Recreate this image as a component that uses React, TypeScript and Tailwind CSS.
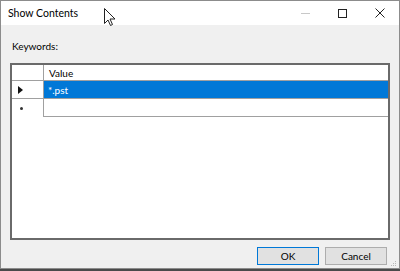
import React from "react";

const font = { fontFamily: 'Lato, "Noto Sans", sans-serif' };

function Cursor() {
  return (
    <svg width="12" height="19" viewBox="0 0 12 19" className="absolute left-[103px] top-[7px]">
      <path d="M0.5 0.5 L0.5 15.5 L4 12 L6.5 17.5 L8.5 16.5 L6 11 L11 11 Z" fill="white" stroke="#222" strokeWidth="1" strokeLinejoin="round" />
    </svg>
  );
}

function Grip() {
  const dots = [
    [5, 0],
    [3, 2], [5, 2],
    [1, 4], [3, 4], [5, 4],
  ];
  return (
    <svg width="7" height="6" viewBox="0 0 7 6" className="absolute right-[2px] bottom-[1px]">
      {dots.map(([x, y], i) => (
        <rect key={i} x={x} y={y} width="1" height="1" fill="#b8b8b8" />
      ))}
    </svg>
  );
}

export default function App() {
  return (
    <div className="w-[400px] h-[271px] bg-[#4a4a4a] overflow-hidden" style={font}>
      <div className="relative w-[400px] h-[269px] border border-[#8c8c8c] flex flex-col bg-[#f0f0f0]">
        {/* Title bar */}
        <div className="h-[24px] bg-white flex items-center shrink-0">
          <span className="pl-[7px] text-[10.5px] text-black leading-none">Show Contents</span>
          <div className="ml-auto flex items-center h-full">
            <div className="w-[37px] h-full flex items-center justify-center">
              <svg width="9" height="9" viewBox="0 0 9 9">
                <line x1="0" y1="4.5" x2="9" y2="4.5" stroke="#c8c8c8" strokeWidth="1" />
              </svg>
            </div>
            <div className="w-[37px] h-full flex items-center justify-center">
              <svg width="9" height="9" viewBox="0 0 9 9">
                <rect x="0.5" y="0.5" width="8" height="8" fill="none" stroke="#222" strokeWidth="1" />
              </svg>
            </div>
            <div className="w-[37px] h-full flex items-center justify-center mr-[1px]">
              <svg width="10" height="10" viewBox="0 0 10 10">
                <path d="M0.5 0.5 L9.5 9.5 M9.5 0.5 L0.5 9.5" stroke="#222" strokeWidth="1" />
              </svg>
            </div>
          </div>
        </div>

        {/* Body */}
        <div className="flex-1 flex flex-col">
          <div className="pl-[11px] pt-[15px] text-[10px] leading-[12px] text-black">Keywords:</div>
          <div className="ml-[9px] mt-[11px] w-[380px] h-[177px] border-2 border-[#6a6a6a] bg-white flex flex-col">
            {/* Header */}
            <div className="flex h-[16px] border-b border-[#a0a0a0]">
              <div className="w-[32px] border-r border-[#a0a0a0]" />
              <div className="flex-1 flex items-center pl-[5px] text-[10px] text-black leading-none">Value</div>
            </div>
            {/* Row 1 */}
            <div className="flex h-[18px] border-b border-[#a0a0a0]">
              <div className="w-[32px] border-r border-[#a0a0a0] flex items-center pl-[6px]">
                <svg width="5" height="8" viewBox="0 0 5 8">
                  <path d="M0 0 L5 4 L0 8 Z" fill="#111" />
                </svg>
              </div>
              <div className="flex-1 bg-[#0078d7] flex items-center pl-[4px] text-[10px] text-white leading-none">*.pst</div>
            </div>
            {/* Row 2 */}
            <div className="flex h-[18px]">
              <div className="w-[32px] border-r border-[#a0a0a0] flex items-center pl-[8px]">
                <div className="w-[3px] h-[3px] rounded-full bg-[#333]" />
              </div>
              <div className="flex-1 border-b border-[#a0a0a0]" />
            </div>
          </div>
          {/* Buttons */}
          <div className="flex justify-end gap-[6px] pr-[12px] mt-[7px]">
            <button className="w-[62px] h-[18px] border border-[#0078d7] bg-[#e1e1e1] text-[10px] text-black leading-none">OK</button>
            <button className="w-[62px] h-[18px] border border-[#adadad] bg-[#e1e1e1] text-[10px] text-black leading-none">Cancel</button>
          </div>
        </div>
        <Grip />
        <Cursor />
      </div>
    </div>
  );
}
